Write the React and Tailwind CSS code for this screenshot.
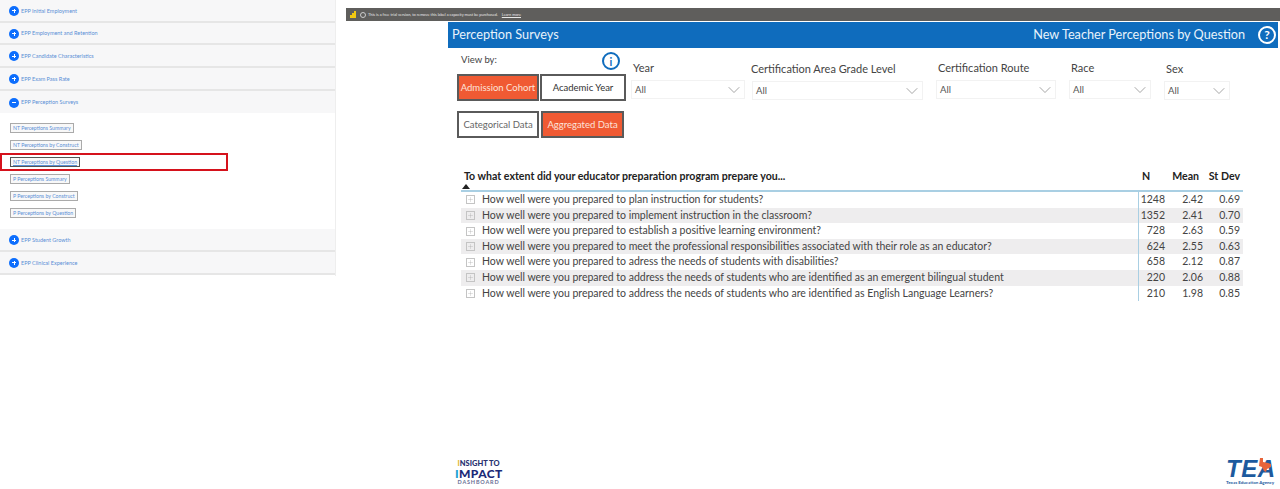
import React from 'react';
import { ChevronDown, Plus } from 'lucide-react';

const questions = [
  ['How well were you prepared to plan instruction for students?', '1248', '2.42', '0.69'],
  ['How well were you prepared to implement instruction in the classroom?', '1352', '2.41', '0.70'],
  ['How well were you prepared to establish a positive learning environment?', '728', '2.63', '0.59'],
  ['How well were you prepared to meet the professional responsibilities associated with their role as an educator?', '624', '2.55', '0.63'],
  ['How well were you prepared to adress the needs of students with disabilities?', '658', '2.12', '0.87'],
  ['How well were you prepared to address the needs of students who are identified as an emergent bilingual student', '220', '2.06', '0.88'],
  ['How well were you prepared to address the needs of students who are identified as English Language Learners?', '210', '1.98', '0.85'],
];

const links = ['NT Perceptions Summary', 'NT Perceptions by Construct', 'NT Perceptions by Question', 'P Perceptions Summary', 'P Perceptions by Construct', 'P Perceptions by Question'];

const AccordionRow = ({ title, open }) => (
  <div className={`h-[22.7px] flex items-center pl-[9px] pt-[1px] bg-[#f7f7f8] ${open ? '' : 'border-b-2 border-[#e6e6e6]'}`}>
    <span className="w-[10px] h-[10px] rounded-full bg-[#0d6efd] flex items-center justify-center shrink-0">
      <span className="relative w-[4px] h-[1px] bg-white">
        {!open && <span className="absolute left-[1.5px] top-[-1.5px] w-[1px] h-[4px] bg-white"></span>}
      </span>
    </span>
    <span className="text-[5.5px] text-[#5a8fd6] ml-[2px]">{title}</span>
  </div>
);

const Filter = ({ label, width, className, selectClass, labelClass }) => (
  <div className={className} style={{ width }}>
    <div className={`text-[11px] leading-[16px] text-[#444] ${labelClass || 'pl-[2px]'}`}>{label}</div>
    <div className={`h-[19px] border border-[#f2f2f2] flex items-center justify-between pl-[3px] text-[9.5px] text-[#555] ${selectClass || 'mt-[4px]'}`}>
      <span className="pt-[1px]">All</span>
      <ChevronDown size={20} strokeWidth={0.7} className="text-[#666]" />
    </div>
  </div>
);

const ToggleButton = ({ label, active, width, muted }) => (
  <div className={`h-[27px] pt-[1px] border-2 border-[#5a5a5a] flex items-center justify-center text-[9.5px] whitespace-nowrap ${active ? 'bg-[#f05a33] text-[#fde3da]' : muted ? 'bg-white text-[#666]' : 'bg-white text-[#333]'} ${width}`}>
    {label}
  </div>
);

const InsightLogo = () => (
  <div className="w-[47px] leading-none text-center">
    <div className="text-[7.5px] font-black text-[#26316f] whitespace-nowrap">
      <span className="text-[#e3b93c]">I</span>NSIGHT TO
    </div>
    <div className="text-[12px] font-black text-[#1c2a78] tracking-[0.4px]">
      <span className="text-[#1a9fd0]">I</span>MPACT
    </div>
    <div className="text-[5.5px] font-bold text-[#6a6f95] tracking-[0.8px]">DASHBOARD</div>
  </div>
);

const TeaLogo = () => (
  <div className="relative w-[46px] leading-none">
    <div className="text-[24px] font-bold italic text-[#1d5a9e] tracking-[0.5px] font-['Liberation_Sans',sans-serif]">TEA</div>
    <svg className="absolute right-[0px] top-[1px]" width="15" height="14" viewBox="0 0 15 14">
      <path d="M3 0h3v4l5 1 3 1 0 3-4 2-1 3-2-1-2-4-3-1z" fill="#e8643a" />
    </svg>
    <div className="text-[4.5px] font-bold text-[#1d5a9e] whitespace-nowrap">Texas Education Agency</div>
  </div>
);

export default function App() {
  return (
    <div className="w-[1280px] h-[489px] bg-white flex overflow-hidden font-['Lato',sans-serif]">
      {/* left accordion */}
      <div className="w-[336px] h-[276px] shrink-0 border-r border-[#eeeeee]">
        <AccordionRow title="EPP Initial Employment" />
        <AccordionRow title="EPP Employment and Retention" />
        <AccordionRow title="EPP Candidate Characteristics" />
        <AccordionRow title="EPP Exam Pass Rate" />
        <AccordionRow title="EPP Perception Surveys" open />
        <div className="h-[116px] pl-[10px] pt-[11px] flex flex-col gap-[9px] items-start">
          {links.map((link, i) => (
            <div key={link} className="relative h-[8px] w-full flex items-center">
              <span className={`border px-[2px] h-[10px] leading-[8px] text-[5.2px] text-[#5a8fd6] bg-[#f8f8f8] ${i === 2 ? 'border-[#555] underline' : 'border-[#aaa]'}`}>{link}</span>
              {i === 2 && <div className="absolute left-[-10px] top-[-5px] w-[228px] h-[18px] border-2 border-[#d5121c]"></div>}
            </div>
          ))}
        </div>
        <AccordionRow title="EPP Student Growth" />
        <AccordionRow title="EPP Clinical Experience" />
      </div>

      {/* report */}
      <div className="flex-1 pl-[10px] pt-[8px] flex flex-col">
        <div className="h-[13px] bg-[#5f5e5c] flex items-center pl-[4px] text-[3.9px] text-[#e8e8e8] whitespace-nowrap">
          <svg className="shrink-0" width="6" height="7" viewBox="0 0 6 7">
            <path d="M0 7V4h2V2h2V0h2v7z" fill="#f2c811" />
          </svg>
          <span className="w-[6px] h-[6px] rounded-full border border-[#ccc] ml-[4px] mr-[2px] shrink-0"></span>
          <span>This is a free trial version, to remove this label a capacity must be purchased.</span>
          <span className="underline ml-[4px]">Learn more</span>
        </div>

        <div className="ml-[102px] w-[830px] flex-1 flex flex-col">
          <div className="h-[26px] mt-[1px] bg-[#0f6cbd] flex items-center justify-between pl-[4px] pr-[2px]">
            <span className="text-[12.7px] text-[#e8f2fb]">Perception Surveys</span>
            <div className="flex items-center gap-[13px]">
              <span className="text-[12.7px] text-[#e8f2fb]">New Teacher Perceptions by Question</span>
              <span className="w-[18px] h-[18px] rounded-full border-2 border-white flex items-center justify-center text-[12px] font-bold leading-none text-white">?</span>
            </div>
          </div>

          <div className="flex items-start">
            <div className="w-[183px] pl-[9px] shrink-0">
              <div className="relative h-[26px] pl-[4px] pt-[5px] text-[9.5px] text-[#444]">
                View by:
                <span className="absolute left-[145px] top-[4px] w-[18px] h-[18px] rounded-full border-2 border-[#0f6cbd] flex items-center justify-center text-[11px] font-bold text-[#0f6cbd] leading-none">i</span>
              </div>
              <div className="flex gap-[1px]">
                <ToggleButton label="Admission Cohort" active width="w-[82px]" />
                <ToggleButton label="Academic Year" width="w-[86px]" />
              </div>
              <div className="flex gap-[2px] mt-[10px]">
                <ToggleButton label="Categorical Data" muted width="w-[82px]" />
                <ToggleButton label="Aggregated Data" active width="w-[83px]" />
              </div>
            </div>
            <div className="flex items-start pt-[12px]">
              <Filter label="Year" width="114px" />
              <Filter label="Certification Area Grade Level" width="171px" className="ml-[7px] mt-[1px]" selectClass="mt-[4px]" labelClass="-ml-[1px]" />
              <Filter label="Certification Route" width="120px" className="ml-[13px]" />
              <Filter label="Race" width="82px" className="ml-[13px]" />
              <Filter label="Sex" width="66px" className="ml-[13px] mt-[1px]" />
            </div>
          </div>

          {/* matrix table */}
          <div className="ml-[13px] w-[782px] mt-[30px]">
            <div className="relative grid grid-cols-[677px_27px_38px_40px] h-[24px] pb-[4px] items-center text-[10.6px] font-bold text-[#222] border-b-2 border-[#a9cfe3]">
              <span className="pl-[3px]">To what extent did your educator preparation program prepare you...</span>
              <span className="pl-[4px]">N</span>
              <span className="text-right pr-[4px]">Mean</span>
              <span className="text-right pr-[3px]">St Dev</span>
              <span className="absolute left-[1px] bottom-[1px] w-0 h-0 border-x-[4px] border-x-transparent border-b-[5px] border-b-[#222]"></span>
            </div>
            {questions.map(([q, n, mean, sd], i) => (
              <div key={q} className={`grid grid-cols-[677px_27px_38px_40px] h-[15.6px] items-center text-[10.5px] text-[#444] ${i % 2 === 1 ? 'bg-[#eeedee]' : ''}`}>
                <div className="flex items-center whitespace-nowrap">
                  <span className="w-[9px] h-[9px] ml-[5px] mr-[7px] border border-[#c4c4c4] flex items-center justify-center text-[#999] shrink-0">
                    <Plus size={7} strokeWidth={1} />
                  </span>
                  {q}
                </div>
                <span className="text-right h-full border-l border-[#a9cfe3] leading-[15.6px]">{n}</span>
                <span className="text-right">{mean}</span>
                <span className="text-right pr-[3px]">{sd}</span>
              </div>
            ))}
          </div>

          {/* logos */}
          <div className="mt-auto pb-[4px] flex items-end justify-between pl-[7px] pr-[6px]">
            <InsightLogo />
            <TeaLogo />
          </div>
        </div>
      </div>
    </div>
  );
}
